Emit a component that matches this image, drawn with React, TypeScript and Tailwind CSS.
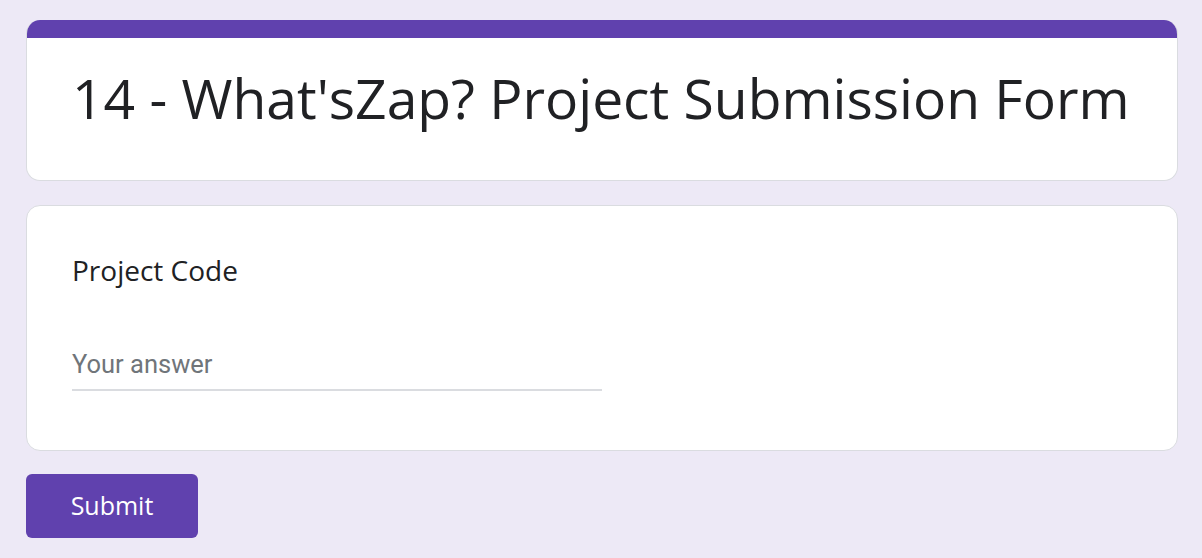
export default function App() {
  return (
    <div className="min-h-[558px] bg-[#ede9f6] px-[26px] pt-[20px] font-['Open_Sans',sans-serif]">
      <div className="w-[1152px] overflow-hidden rounded-[14px] border-x border-b border-[#dadce0] bg-white">
        <div className="h-[18px] bg-[#6041ae]" />
        <div className="px-[45px] pb-[43px] pt-[21px]">
          <h1 className="whitespace-nowrap text-[55.2px] leading-[78px] text-[#202124]">14 - What'sZap? Project Submission Form</h1>
        </div>
      </div>

      <div className="mt-[24px] w-[1152px] rounded-[14px] border border-[#dadce0] bg-white px-[45px] pb-[59px] pt-[46px]">
        <div className="text-[28px] leading-[36px] text-[#202124]">Project Code</div>
        <div className="mt-[60px] w-[530px] border-b-2 border-[#dadce0] pb-[9px]">
          <span className="block font-['Roboto',sans-serif] text-[25.5px] leading-[32px] text-[#70757a]">Your answer</span>
        </div>
      </div>

      <button
        type="button"
        className="mt-[23px] flex h-[64px] w-[172px] items-center justify-center rounded-[6px] bg-[#6041ae] text-[25px] font-medium text-white"
      >
        Submit
      </button>
    </div>
  );
}
